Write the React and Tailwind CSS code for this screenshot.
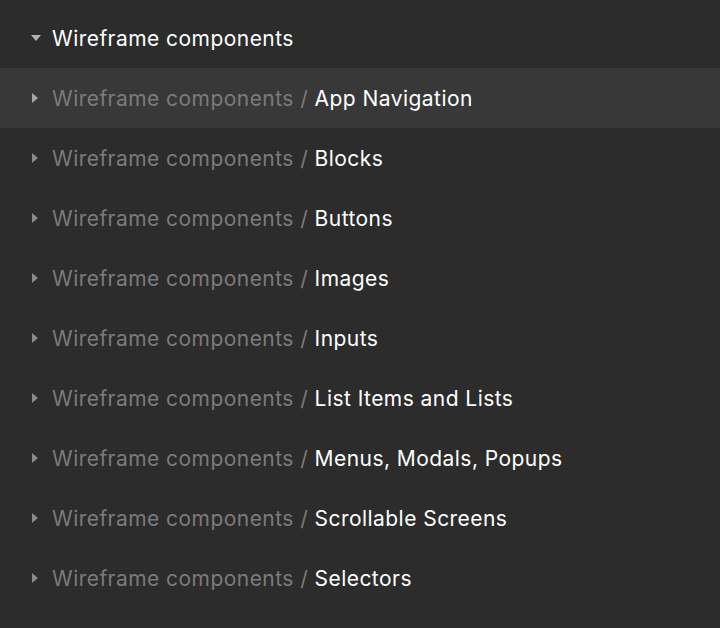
import React from "react";

const items = [
  "App Navigation",
  "Blocks",
  "Buttons",
  "Images",
  "Inputs",
  "List Items and Lists",
  "Menus, Modals, Popups",
  "Scrollable Screens",
  "Selectors",
];

export default function App() {
  return (
    <div
      className="w-[720px] h-[628px] bg-[#2c2c2c] pt-2 overflow-hidden"
      style={{ fontFamily: "Inter, 'Noto Sans', sans-serif" }}
    >
      <div className="flex items-center h-[60px]">
        <div className="w-[52px] flex justify-end pr-[11px]">
          <svg width="10" height="6" viewBox="0 0 10 6">
            <path d="M0 0 L10 0 L5 6 Z" fill="#b3b3b3" />
          </svg>
        </div>
        <span className="text-[21px] text-white tracking-[0.45px] pt-[2px]">Wireframe components</span>
      </div>
      {items.map((it, i) => (
        <div
          key={it}
          className={`flex items-center h-[60px] ${i === 0 ? "bg-[#383838]" : ""}`}
        >
          <div className="w-[52px] flex justify-end pr-[14px]">
            <svg width="6" height="10" viewBox="0 0 6 10">
              <path d="M0 0 L6 5 L0 10 Z" fill={i === 0 ? "#a6a6a6" : "#8a8a8a"} />
            </svg>
          </div>
          <span className="text-[21px] tracking-[0.45px] text-[#7b7b7b] pt-[2px]">
            Wireframe components /{" "}
            <span className="text-white">{it}</span>
          </span>
        </div>
      ))}
    </div>
  );
}
